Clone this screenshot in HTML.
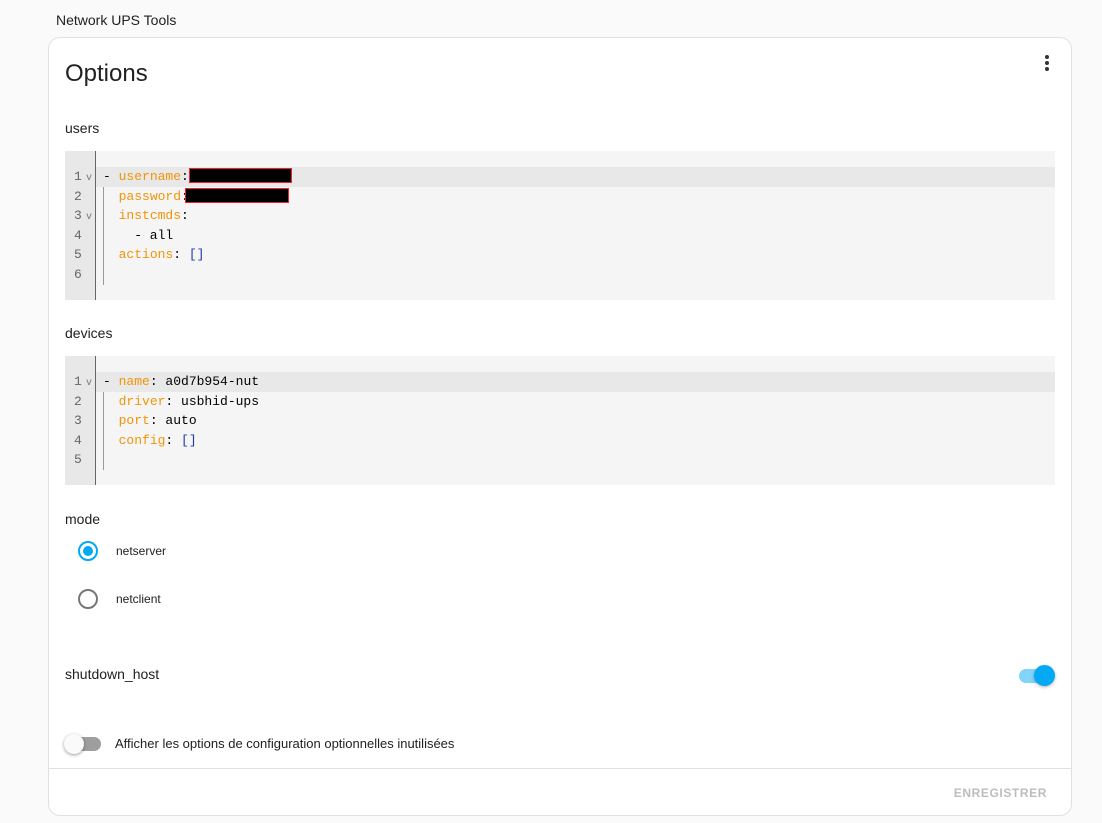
<!DOCTYPE html>
<html><head><style>
*{box-sizing:border-box;margin:0;padding:0}
body{width:1102px;height:823px;background:#fafafa;font-family:"Liberation Sans",Roboto,sans-serif;color:#212121;position:relative;overflow:hidden}
.title{position:absolute;left:56px;top:12px;font-size:14px}
.card{position:absolute;left:48px;top:37px;width:1024px;height:779px;background:#fff;border:1px solid #e0e0e0;border-radius:12px}
.h{position:absolute;left:16px;top:22px;font-size:24px}
.dots{position:absolute;right:22px;top:17px;width:4px}
.dots i{display:block;width:4px;height:4px;border-radius:50%;background:#333;margin-bottom:2px}
.lbl{position:absolute;left:16px;font-size:14px}
.ed{position:absolute;left:16px;width:990px;background:#f5f5f5;font-family:"Liberation Mono",monospace;font-size:13px}
.gut{position:absolute;left:0;top:0;bottom:0;width:31px;background:#e8e8e8;border-right:1px solid #666}
.ln{position:absolute;height:19.6px;line-height:19.6px;left:0;width:100%}
.ln .n{position:absolute;left:9px;color:#666}
.ln .f{position:absolute;left:21px;top:2px;color:#777;font-size:10px}
.ln .t{position:absolute;left:38px;white-space:pre;color:#000}
.act{background:#e8e8e8;left:31px}
.k{color:#f29406}.b{color:#1a3cb0}
.guide{position:absolute;left:38px;width:1px;background:#999}
.red{display:inline-block;background:#000;border:1px solid #e23;height:15px;vertical-align:-3px}
.radio{position:absolute;left:30px;width:20px;height:20px;border-radius:50%;border:2px solid #777}
.radio.on{border-color:#03a9f4}
.radio.on:after{content:"";position:absolute;left:3px;top:3px;width:10px;height:10px;border-radius:50%;background:#03a9f4}
.rl{position:absolute;left:68px;font-size:12px}
</style></head><body>
<div class="title">Network UPS Tools</div>
<div class="card">
<div class="h">Options</div>
<div class="dots"><i></i><i></i><i></i></div>
<div class="lbl" style="top:82px">users</div>
<div class="ed" style="top:113px;height:149px">
 <div class="gut"></div>
 <div class="ln act" style="top:16px;width:959px"></div>
 <div class="guide" style="top:36px;height:98px"></div>
 <div class="ln" style="top:16px"><span class="n">1</span><span class="f">v</span><span class="t">- <span class="k">username</span>:<span class="red" style="width:103px"></span></span></div>
 <div class="ln" style="top:35.6px"><span class="n">2</span><span class="t">  <span class="k">password</span>:<span class="red" style="width:104px;margin-left:-4px"></span></span></div>
 <div class="ln" style="top:55.2px"><span class="n">3</span><span class="f">v</span><span class="t">  <span class="k">instcmds</span>:</span></div>
 <div class="ln" style="top:74.8px"><span class="n">4</span><span class="t">    - all</span></div>
 <div class="ln" style="top:94.4px"><span class="n">5</span><span class="t">  <span class="k">actions</span>: <span class="b">[]</span></span></div>
 <div class="ln" style="top:114px"><span class="n">6</span></div>
</div>
<div class="lbl" style="top:287px">devices</div>
<div class="ed" style="top:318px;height:129px">
 <div class="gut"></div>
 <div class="ln act" style="top:16px;width:959px"></div>
 <div class="guide" style="top:36px;height:78px"></div>
 <div class="ln" style="top:16px"><span class="n">1</span><span class="f">v</span><span class="t">- <span class="k">name</span>: a0d7b954-nut</span></div>
 <div class="ln" style="top:35.6px"><span class="n">2</span><span class="t">  <span class="k">driver</span>: usbhid-ups</span></div>
 <div class="ln" style="top:55.2px"><span class="n">3</span><span class="t">  <span class="k">port</span>: auto</span></div>
 <div class="ln" style="top:74.8px"><span class="n">4</span><span class="t">  <span class="k">config</span>: <span class="b">[]</span></span></div>
 <div class="ln" style="top:94.4px"><span class="n">5</span></div>
</div>
<div class="lbl" style="top:473px">mode</div>
<div class="radio on" style="top:503px;left:29px"></div><div class="rl" style="top:506px;left:67px">netserver</div>
<div class="radio" style="top:551px;left:29px"></div><div class="rl" style="top:554px;left:67px">netclient</div>
<div class="lbl" style="top:628px">shutdown_host</div>
<div style="position:absolute;left:970px;top:631px;width:34px;height:14px;border-radius:7px;background:#81d4fa"></div>
<div style="position:absolute;left:985px;top:627px;width:21px;height:21px;border-radius:50%;background:#03a9f4;box-shadow:0 1px 3px rgba(0,0,0,.3)"></div>
<div style="position:absolute;left:18px;top:699px;width:34px;height:14px;border-radius:7px;background:#9e9e9e"></div>
<div style="position:absolute;left:15px;top:696px;width:20px;height:20px;border-radius:50%;background:#fafafa;box-shadow:0 1px 3px rgba(0,0,0,.4)"></div>
<div style="position:absolute;left:66px;top:698px;font-size:13px">Afficher les options de configuration optionnelles inutilisées</div>
<div style="position:absolute;left:0;right:0;top:730px;border-top:1px solid #e0e0e0"></div>
<div style="position:absolute;right:24px;top:748px;font-size:12px;font-weight:bold;letter-spacing:0.6px;color:#bdbdbd">ENREGISTRER</div>
</div>
</body></html>
